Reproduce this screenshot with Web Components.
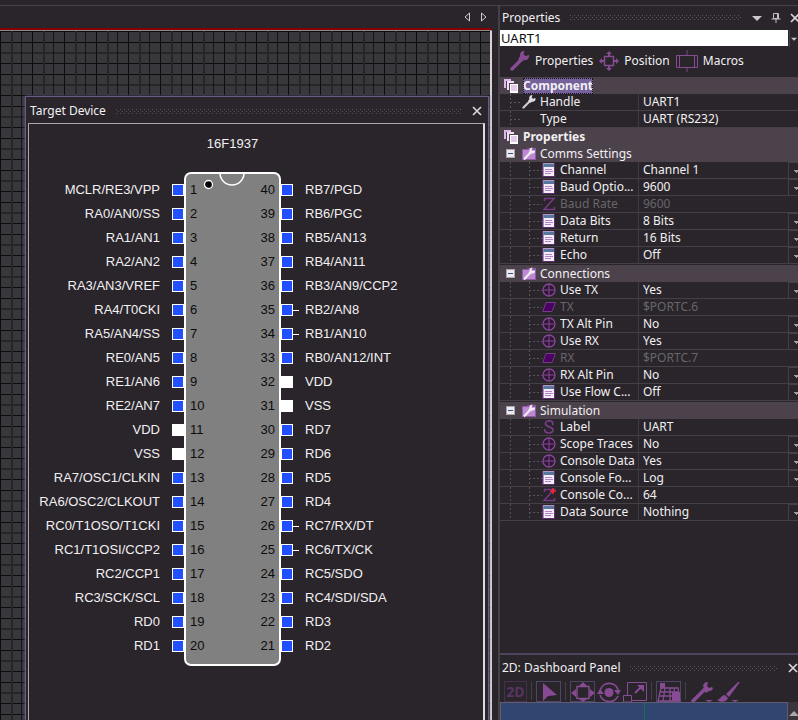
<!DOCTYPE html>
<html lang="en">
<head>
<meta charset="utf-8">
<title>Component properties</title>
<style>
  html, body { margin: 0; height: 100%; }
  body {
    overflow: hidden;
    background: #29252b;
    color: #f2f0f2;
    font: 12px/16px "Noto Sans", "Open Sans", sans-serif;
  }
</style>
</head>
<body>
<ide-shell>
  <design-canvas slot="canvas">
    <target-device></target-device>
  </design-canvas>
  <properties-panel slot="side"></properties-panel>
  <dashboard-panel slot="side"></dashboard-panel>
</ide-shell>

<script>
const base = `
  * { box-sizing: border-box; }
  button { appearance: none; margin: 0; padding: 0; border: 0; background: none; color: inherit; font: inherit; }
  svg { display: block; }
`;

function define(name, markup, setup) {
  customElements.define(name, class extends HTMLElement {
    connectedCallback() {
      if (this.shadowRoot) return;
      const root = this.attachShadow({ mode: 'open' });
      const template = document.createElement('template');
      template.innerHTML = `<style>${base}</style>` + (typeof markup === 'function' ? markup(this) : markup);
      root.append(template.content.cloneNode(true));
      if (setup) setup(this, root);
    }
  });
}

/* Icon drawings, each on its own view box */
const icons = {
  wrench: [20, 20, `<path d="M2 18 11 9" stroke="#874b94" stroke-width="3.500" stroke-linecap="round"/><path d="M19 4l-3.500 1-2-1.500L14.500 0c-3-.5-5 2-4.300 5l-2 3 3 3 3-2c3 .8 5.500-2 4.800-5z" fill="#874b94"/>`],
  move: [20, 20, `<path d="M5.500 5.500h9v9h-9z" fill="none" stroke="#874b94" stroke-width="1.500"/><path d="M10 0l3 3h-2v2H9V3H7zM10 20l3-3h-2v-2H9v2H7zM0 10l3-3v2h2v2H3v2zM20 10l-3-3v2h-2v2h2v2z" fill="#874b94"/>`],
  macro: [22, 22, `<path d="M11 0v5M11 17v5" stroke="#4f3656" stroke-width="2"/><path d="M.5 5.500h21v12H.5zM3.500 5.500v12M18.500 5.500v12" fill="none" stroke="#874b94"/>`],
  pages: [14, 14, `<path d="M0 0h7v2H2v7H0z" fill="#dcb9e8"/><path d="M3 2h7v2H5v7H3z" fill="#f2ddf8"/><path d="M6 5h8v9H6z" fill="#fff"/><path d="M7 7h6M7 9h6M7 11h6" stroke="#c397d2"/>`],
  tool: [14, 14, `<path d="M1.500 12.500l6.500-6.500" stroke="#cfcbcf" stroke-width="2.200" stroke-linecap="round"/><path d="M13.500 3l-2.500.8-1.300-1.200L10.500 0C8 0 6.700 2 7.300 4.200L6 6l2 2 2-1.300c2.200.5 4-1.300 3.500-3.700z" fill="#dedade"/>`],
  folder: [14, 14, `<path d="M0 2h5l1-1h8v12H0z" fill="#8f58ab"/><path d="M1 3h12v9H1z" fill="#bd8ad2"/><path d="M2 12.500l6-6.500" stroke="#f1ecf2" stroke-width="2"/><path d="M13 3.500l-2.300.5-1-1L10.500.5C8.500.5 7 2 7.500 4L6.500 6 8 7.500 10 6.500c2 .3 3.500-1 3-3z" fill="#f1ecf2"/>`],
  list: [14, 14, `<path d="M0 0h13v14H0z" fill="#5d2f70"/><path d="M1.500 0h10.500v13H1.500z" fill="#f4edf8"/><path d="M1.500 0h10.500v1H1.500z" fill="#b39ac6"/><path d="M1.500 1h10.500v3H1.500z" fill="#58779f"/><path d="M3 6.500h7M3 8.500h8M3 10.500h6" stroke="#b382c7"/>`],
  target: [14, 14, `<circle cx="7" cy="7" r="6" fill="#301735" stroke="#854998" stroke-width="1.300"/><path d="M7 1v12M1 7h12" stroke="#854998"/>`],
  port: [14, 14, `<path d="M4 2.500h9.500L10 11.500H.8z" fill="#4c0066" stroke="#71417f"/>`],
  z: [14, 14, `<path d="M2.500 4V1.500h9.500L2 12.500h10.500V10" fill="none" stroke="#763b86" stroke-width="1.500"/>`],
  zplus: [14, 14, `<path d="M2.500 4V1.500h9.500L2 12.500h10.500V10" fill="none" stroke="#763b86" stroke-width="1.500"/><path d="M11 0v6M8 3h6" stroke="#ff2430" stroke-width="1.500"/>`],
  s: [14, 14, `<path d="M11 5l-.5-3C7-.2 3 1 3.500 4c.5 3.300 7.500 2.500 7.500 6 0 3.200-5 4-8 1.500L2.500 9" fill="none" stroke="#763b86" stroke-width="1.700"/>`],
  none: [14, 14, ''],
  close: [10, 10, `<path d="M1 1l8 8M9 1L1 9" stroke="#d8d5d8" stroke-width="1.700"/>`],
  menu: [10, 10, `<path d="M0 3h10L5 8z" fill="#cbc8cb"/>`],
  pin: [10, 10, `<path d="M2.500.5h5v5h-5zM6.500 1v4M.5 6h9M5 6v4" fill="none" stroke="#c4c1c4"/>`],
  prev: [8, 10, `<path d="M5.500 1v8L1 5z" fill="none" stroke="#d0cdd0"/>`],
  next: [8, 10, `<path d="M2.500 1v8L7 5z" fill="none" stroke="#d0cdd0"/>`],
  up: [10, 10, `<path d="M1 8l5-5 4 4v1z" fill="#aaa6aa"/>`],
  pointer: [24, 20, `<path d="M6 1v18l5-5 9-1z" fill="#874b94"/>`],
  shift: [24, 20, `<path d="M6 4.500h12v12H6z" fill="none" stroke="#874b94" stroke-width="1.500"/><path d="M0 11l5-4v8zM24 11l-5-4v8zM8 4l4-4 4 4zM8 17h8l-4 3z" fill="#874b94"/>`],
  rotate: [24, 20, `<circle cx="12" cy="10.500" r="4.500" fill="#874b94"/><path d="M3 9C5-1 19-1 21 8M3 13c3 8 14 9 18 1" fill="none" stroke="#874b94" stroke-width="1.600"/><path d="M0 12l3-5 4 5zM17 8h7l-3 5z" fill="#874b94"/>`],
  scale: [24, 20, `<path d="M4.500 13V.5h19v18H9M.5 13.500h8V20H.5z" fill="none" stroke="#874b94"/><path d="M12 11l7-7" stroke="#874b94" stroke-width="2"/><path d="M14 3h7v7z" fill="#874b94"/>`],
  mesh: [24, 20, `<path d="M4 6h17l2 13H1zM3 10h19M2 14h20M8 6L6 19M13 6v13M17 6l1 13" fill="none" stroke="#874b94" stroke-width="1.300"/><path d="M3 1h5v5H3zM15 10h8v9h-8z" fill="#874b94"/>`],
  spanner: [24, 20, `<path d="M1 20L14 7" stroke="#874b94" stroke-width="3.500"/><path d="M21 5l-3 1-2-2 1-4c-4 0-6 3-4 6l-1 2 3 3 3-2c3 0 5-2 3-4zM14 18h8l-4 2z" fill="#874b94"/>`],
  brush: [24, 20, `<path d="M21 0L9 12l3 3L23 0zM8 13c-4 0-4 4-8 5 4 3 10 2 11-2zM14 18h8l-4 2z" fill="#874b94"/>`]
};
const icon = name => {
  const [w, h, body] = icons[name];
  return `<svg aria-hidden="true" width="${w}" height="${h}" viewBox="0 0 ${w} ${h}">${body}</svg>`;
};

define('ide-shell', `
  <style>
    :host { display: flex; flex-direction: column; height: 100%; }
    .top { height: 6px; flex: none; border-bottom: 1px solid #454147; }
    .work { flex: 1; min-height: 0; display: grid; grid-template-columns: minmax(0, 1fr) 300px; column-gap: 6px; }
    .side { display: flex; flex-direction: column; min-width: 0; min-height: 0; overflow: hidden; border-left: 2px solid #454147; }
  </style>
  <div class="top"></div>
  <div class="work">
    <slot name="canvas"></slot>
    <div class="side"><slot name="side"></slot></div>
  </div>`);

/* Scrolling tab strip with the gridded drawing area under it */
define('design-canvas', `
  <style>
    :host { display: flex; flex-direction: column; min-width: 0; min-height: 0; }
    .tabs { flex: none; display: flex; justify-content: flex-end; align-items: center; gap: 7px; height: 22px; padding-right: 5px; }
    .area {
      flex: 1; min-height: 0; display: flex;
      padding: 65px 1px 0 25px;
      border-right: 2px solid #d5d3d5;
      background:
        linear-gradient(90deg, #0c0c0d 1px, transparent 1px 11px, #262528 11px 13px, transparent 13px 21px, #151416 21px 22px, transparent 22px) 0 0 / 32px 32px,
        linear-gradient(#0c0c0d 1px, transparent 1px 11px, #0c0c0d 11px 12px, transparent 12px 21px, #262528 21px 23px, transparent 23px) 0 0 / 32px 32px,
        #38373b;
    }
    .edge { flex: none; height: 3px; background: #850000; border-bottom: 1px solid #8d898d; }
    slot { display: flex; flex: 1; min-width: 0; }
    ::slotted(*) { flex: 1; min-width: 0; }
  </style>
  <div class="tabs">
    <button aria-label="Previous tab">${icon('prev')}</button>
    <button aria-label="Next tab">${icon('next')}</button>
  </div>
  <div class="edge"></div>
  <div class="area"><slot></slot></div>`);

/* Title, dotted grip and the buttons of a docked window */
define('title-bar', `
  <style>
    :host { flex: none; display: flex; align-items: center; gap: 10px; height: 26px; padding-left: 2px; white-space: nowrap; }
    .grip {
      flex: 1; height: 5px;
      background:
        linear-gradient(90deg, #59545b 1px, transparent 1px) 0 0 / 4px 1px repeat-x,
        linear-gradient(90deg, #59545b 1px, transparent 1px) 2px 2px / 4px 1px repeat-x,
        linear-gradient(90deg, #59545b 1px, transparent 1px) 0 4px / 4px 1px repeat-x;
    }
    slot[name=tools] { display: flex; gap: 9px; }
  </style>
  <slot></slot><span class="grip"></span><slot name="tools"></slot>`);

define('icon-button', el => `
  <style>
    :host { display: inline-flex; flex: none; }
    button { display: block; }
  </style>
  <button aria-label="${el.getAttribute('label')}">${icon(el.getAttribute('icon'))}</button>`);

define('device-pin', el => `
  <style>
    :host { display: flex; align-items: center; gap: 12px; height: 24px; line-height: 16px; white-space: nowrap; }
    :host([side=left]) { justify-content: flex-end; }
    :host([side=right]) { flex-direction: row-reverse; justify-content: flex-end; }
    .pad { position: relative; flex: none; width: 12px; height: 12px; background: #2050ff; border: 1px solid #fff; }
    :host([power]) .pad { background: #fff; }
    :host([used]) .pad::after { content: ""; position: absolute; left: 11px; top: 5px; width: 6px; height: 1px; background: #fff; }
  </style>
  <span><slot></slot></span><span class="pad"></span>`);

const leftPins = 'MCLR/RE3/VPP RA0/AN0/SS RA1/AN1 RA2/AN2 RA3/AN3/VREF RA4/T0CKI RA5/AN4/SS RE0/AN5 RE1/AN6 RE2/AN7 VDD VSS RA7/OSC1/CLKIN RA6/OSC2/CLKOUT RC0/T1OSO/T1CKI RC1/T1OSI/CCP2 RC2/CCP1 RC3/SCK/SCL RD0 RD1'.split(' ');
const rightPins = 'RB7/PGD RB6/PGC RB5/AN13 RB4/AN11 RB3/AN9/CCP2 RB2/AN8 RB1/AN10 RB0/AN12/INT VDD VSS RD7 RD6 RD5 RD4 RC7/RX/DT RC6/TX/CK RC5/SDO RC4/SDI/SDA RD3 RD2'.split(' ');
const usedPins = new Set(['RB2/AN8', 'RB1/AN10', 'RC7/RX/DT', 'RC6/TX/CK']);
const pins = (names, side) => names.map(n =>
  `<device-pin side="${side}" ${/^V(DD|SS)$/.test(n) ? 'power' : ''} ${usedPins.has(n) ? 'used' : ''}>${n}</device-pin>`).join('');

define('chip-view', `
  <style>
    :host { display: grid; grid-template-columns: 155px 97px 1fr; font: 13px/16px "Liberation Sans", Arial, sans-serif; padding-top: 12px; }
    h2 { grid-column: 2; margin: 0 0 20px; font: inherit; text-align: center; }
    .pins { padding-top: 6px; }
    .left { grid-column: 1; }
    .body { position: relative; display: grid; grid-template-columns: 1fr 1fr; padding: 4px 4px 6px; border: 2px solid #fff; border-radius: 7px; background: #808080; color: #0c0c0c; }
    .body span { height: 24px; line-height: 24px; }
    .body span:nth-of-type(even) { text-align: right; }
    .mark { position: absolute; left: 17px; top: -2px; }
  </style>
  <h2>16F1937</h2>
  <div class="pins left">${pins(leftPins, 'left')}</div>
  <div class="body">
    <svg class="mark" aria-hidden="true" width="46" height="18" viewBox="0 0 46 18">
      <path d="M17 1a12 12 0 0 0 24 0" fill="none" stroke="#fff" stroke-width="1.500"/>
      <circle cx="5.500" cy="12.500" r="4" fill="#000" stroke="#fff" stroke-width="1.300"/>
    </svg>
    ${leftPins.map((_, i) => `<span>${i + 1}</span><span>${40 - i}</span>`).join('')}
  </div>
  <div class="pins">${pins(rightPins, 'right')}</div>`);

define('target-device', `
  <style>
    :host { display: flex; flex-direction: column; background: #29252b; border: 1px solid #6a5a85; border-bottom: 0; box-shadow: 0 0 3px #6a5a85; }
    .view { flex: 1; min-height: 0; margin: 0 3px 0 2px; border: 1px solid #aaa6aa; border-right: 2px solid #dedbde; border-bottom: 0; overflow: hidden; }
    title-bar { padding: 2px 6px 0 4px; }
  </style>
  <title-bar>Target Device<icon-button slot="tools" icon="close" label="Close Target Device"></icon-button></title-bar>
  <div class="view"><chip-view></chip-view></div>`);

/* One name/value line: kind is choice, text or static */
define('prop-row', el => {
  const a = n => el.getAttribute(n);
  const off = el.hasAttribute('disabled') ? 'disabled' : '';
  const kind = a('kind');
  const value = kind === 'choice' ? `<select id="v" ${off}><option>${a('value')}</option></select><span class="arrow"></span>`
    : kind === 'static' ? `<output id="v">${a('value')}</output>`
    : `<input id="v" type="text" value="${a('value')}" ${off}>`;
  return `
  <style>
    :host { display: grid; grid-template-columns: 139px minmax(0, 1fr); height: 17px; line-height: 16px; border-bottom: 1px solid #454047; }
    :host([disabled]) { color: #69656a; }
    .name { display: flex; align-items: center; min-width: 0; border-right: 1px solid #3f3b41; padding-left: 10px; }
    .trunk { flex: none; align-self: stretch; width: 19px; background: linear-gradient(#554c58 2px, transparent 2px) 0 0 / 1px 4px repeat-y; }
    .branch { flex: none; align-self: stretch; width: 13px;
      background:
        linear-gradient(#5a525c 2px, transparent 2px) 0 0 / 1px 4px repeat-y,
        linear-gradient(90deg, #5a525c 2px, transparent 2px) 0 8px / 4px 1px repeat-x; }
    :host([level="1"]) .trunk { display: none; }
    :host([level="1"]) .branch { width: 12px; }
    .name svg { flex: none; margin-right: 4px; }
    label { flex: 1; white-space: nowrap; overflow: hidden; }
    .value { display: flex; min-width: 0; height: 16px; padding-left: 4px; }
    input, select, output { appearance: none; flex: 1; min-width: 0; height: 16px; margin: 0; padding: 0; border: 0; border-radius: 0; outline: 0; opacity: 1; background: none; color: inherit; font: inherit; line-height: 16px; }
    option { color: #222; }
    .arrow { flex: none; width: 10px; border-left: 1px solid #454047; border-top: 1px solid #454047; background: linear-gradient(#a09ca0, #a09ca0) 5px 7px / 5px 1px no-repeat, linear-gradient(#a09ca0, #a09ca0) 6px 8px / 3px 1px no-repeat, linear-gradient(#a09ca0, #a09ca0) 7px 9px / 1px 1px no-repeat; }
  </style>
  <div class="name"><span class="trunk"></span><span class="branch"></span>${icon(a('icon'))}<label for="v">${a('name')}</label></div>
  <div class="value">${value}</div>`;
});

define('prop-heading', `
  <style>
    :host { display: flex; align-items: center; gap: 5px; height: 17px; padding-left: 4px; background: #4c424c; font-weight: bold; line-height: 16px; }
    h3 { margin: 0; font: inherit; }
    :host([selected]) h3 { background: #75629a; outline: 1px dotted #16121c; outline-offset: -1px; }
  </style>
  ${icon('pages')}<h3><slot></slot></h3>`);

define('prop-group', el => `
  <style>
    :host { display: block; }
    :host(:not(:first-of-type)) { padding-top: 1px; }
    header { display: flex; align-items: center; height: 17px; padding-left: 6px; background: #4c424c; line-height: 16px; }
    button { display: grid; place-items: center; width: 9px; height: 9px; margin-right: 7px; background: #eceaf0; border: 1px solid #aaa3ad; }
    button::before { content: ""; width: 5px; height: 1px; background: #35508c; }
    h4 { margin: 0 0 0 4px; font: inherit; }
  </style>
  <header><button aria-expanded="true" aria-label="Collapse ${el.getAttribute('name')}"></button>${icon('folder')}<h4>${el.getAttribute('name')}</h4></header>
  <slot></slot>`);

const row = (ic, name, value, kind = 'choice', extra = '') =>
  `<prop-row icon="${ic}" name="${name}" value="${value}" kind="${kind}" ${extra}></prop-row>`;

define('properties-panel', `
  <style>
    :host { flex: 1; min-height: 0; display: flex; flex-direction: column; }
    title-bar { height: 24px; padding-bottom: 1px; margin-right: -2px; }
    .picker { display: flex; flex: none; height: 17px; }
    .picker input { flex: 1; min-width: 0; height: 16px; padding: 0 1px; border: 0; border-radius: 0; background: #fff; color: #111; font: 13px/16px "Noto Sans", sans-serif; outline: 0; }
    .picker button { display: grid; place-items: center; width: 9px; overflow: hidden; border-left: 1px solid #454047; margin-left: 1px; }
    .picker svg { width: 6px; height: 8px; }
    nav { display: flex; flex: none; align-items: center; height: 28px; padding-left: 10px; gap: 6px; }
    nav button { display: flex; align-items: center; gap: 5px; white-space: nowrap; }
    .tree { flex: 1; min-height: 0; overflow: hidden; padding-top: 2px; }
  </style>
  <title-bar>Properties
    <icon-button slot="tools" icon="menu" label="Window menu"></icon-button>
    <icon-button slot="tools" icon="pin" label="Auto hide"></icon-button>
    <icon-button slot="tools" icon="close" label="Close Properties"></icon-button>
  </title-bar>
  <div class="picker">
    <input type="text" value="UART1" aria-label="Selected component">
    <button aria-label="Choose component">${icon('menu')}</button>
  </div>
  <nav>
    <button>${icon('wrench')}Properties</button>
    <button>${icon('move')}Position</button>
    <button>${icon('macro')}Macros</button>
  </nav>
  <div class="tree">
    <prop-heading selected>Component</prop-heading>
    ${row('tool', 'Handle', 'UART1', 'text', 'level="1"')}
    ${row('none', 'Type', 'UART (RS232)', 'static', 'level="1"')}
    <prop-heading>Properties</prop-heading>
    <prop-group name="Comms Settings">
      ${row('list', 'Channel', 'Channel 1')}
      ${row('list', 'Baud Optio...', '9600')}
      ${row('z', 'Baud Rate', '9600', 'text', 'disabled')}
      ${row('list', 'Data Bits', '8 Bits')}
      ${row('list', 'Return', '16 Bits')}
      ${row('list', 'Echo', 'Off')}
    </prop-group>
    <prop-group name="Connections">
      ${row('target', 'Use TX', 'Yes')}
      ${row('port', 'TX', '$PORTC.6', 'text', 'disabled')}
      ${row('target', 'TX Alt Pin', 'No')}
      ${row('target', 'Use RX', 'Yes')}
      ${row('port', 'RX', '$PORTC.7', 'text', 'disabled')}
      ${row('target', 'RX Alt Pin', 'No')}
      ${row('list', 'Use Flow C...', 'Off')}
    </prop-group>
    <prop-group name="Simulation">
      ${row('s', 'Label', 'UART', 'text')}
      ${row('target', 'Scope Traces', 'No')}
      ${row('target', 'Console Data', 'Yes')}
      ${row('list', 'Console Fo...', 'Log')}
      ${row('zplus', 'Console Co...', '64', 'text')}
      ${row('list', 'Data Source', 'Nothing')}
    </prop-group>
  </div>`);

define('dashboard-panel', `
  <style>
    :host { flex: none; display: flex; flex-direction: column; border-top: 2px solid #4d4460; }
    .tools { display: flex; height: 21px; padding-left: 4px; gap: 1px; overflow: hidden; }
    .tools button { flex: none; height: 21px; width: 25px; display: grid; place-items: center; }
    .tools .framed { border: 1px solid #4c4564; }
    .tools .two { width: 23px; border: 1px solid #44304a; color: #573560; font: bold 14px/18px "Noto Sans", sans-serif; }
    hr { width: 1px; height: 18px; margin: 1px 3px 0; border: 0; background: #454047; }
    .view { display: flex; height: 18px; }
    .plot { flex: 1; border: 1px solid #625b70; border-bottom: 0; background: linear-gradient(#197060, #197060) 50% 0 / 1px 100% no-repeat #304570; }
    .scroll { width: 10px; padding-top: 4px; background: #3a353c; }
  </style>
  <title-bar>2D: Dashboard Panel<icon-button slot="tools" icon="close" label="Close Dashboard Panel"></icon-button></title-bar>
  <div class="tools">
    <button class="two">2D</button><hr>
    <button class="framed" aria-label="Select">${icon('pointer')}</button><hr>
    <button class="framed" aria-label="Move">${icon('shift')}</button>
    <button aria-label="Rotate">${icon('rotate')}</button>
    <button aria-label="Scale">${icon('scale')}</button><hr>
    <button class="framed" aria-label="Grid">${icon('mesh')}</button><hr>
    <button aria-label="Settings">${icon('spanner')}</button>
    <button aria-label="Paint">${icon('brush')}</button>
  </div>
  <div class="view"><div class="plot"></div><button class="scroll" aria-label="Scroll up">${icon('up')}</button></div>`);
</script>
</body>
</html>
